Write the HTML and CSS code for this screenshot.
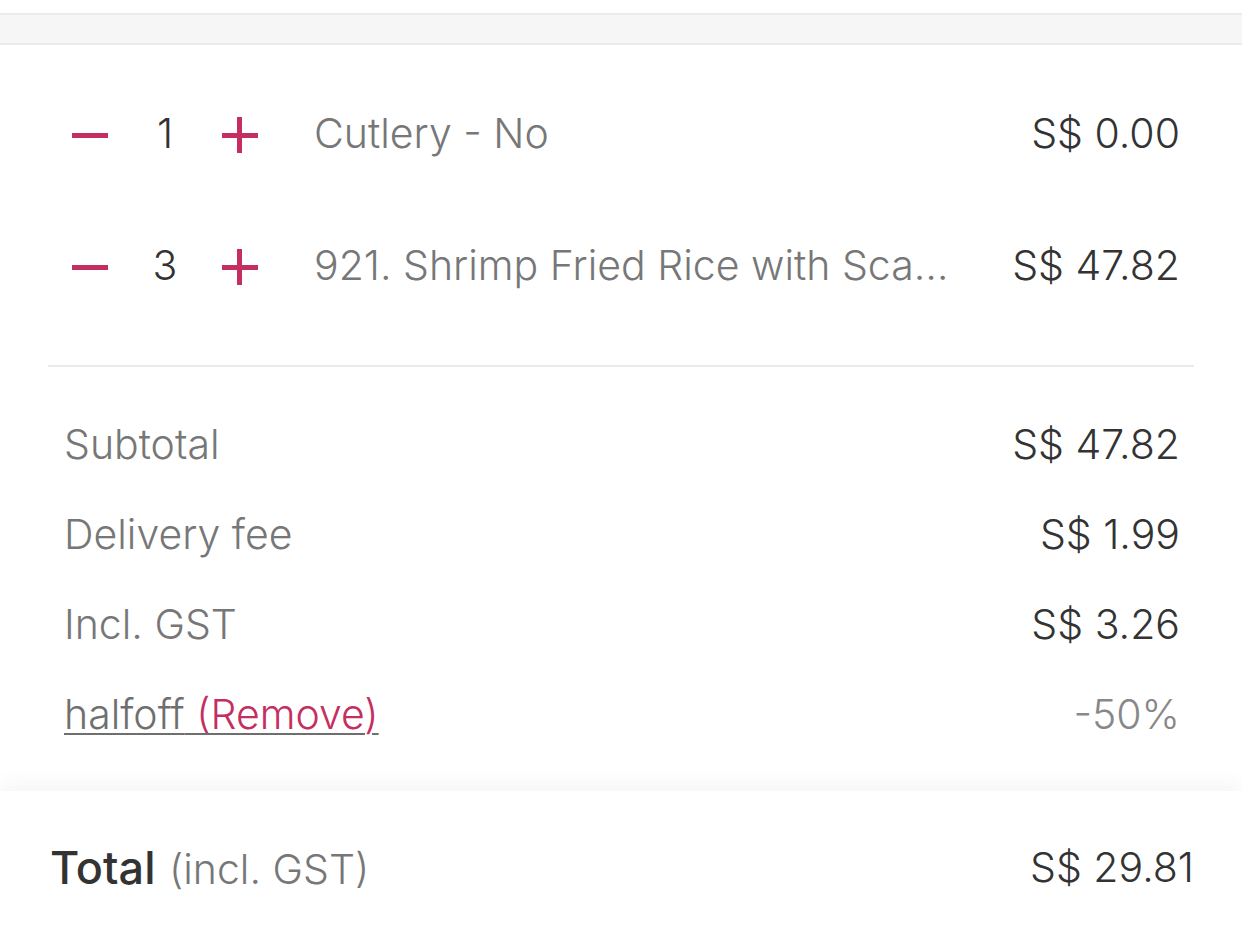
FILE: index.html
```html
<!DOCTYPE html>
<html lang="en">
<head>
    <meta charset="UTF-8">
    <meta name="viewport" content="width=device-width, initial-scale=1.0">
    <title>Cart Summary</title>
    <link rel="stylesheet" href="styles.css">
</head>
<body>

<div class="top-band"></div>

<div class="cart">
    <!-- Items -->
    <div class="items">
        <div class="item">
            <div class="stepper">
                <button class="step minus" aria-label="Decrease"></button>
                <span class="qty">1</span>
                <button class="step plus" aria-label="Increase"></button>
            </div>
            <span class="item-name">Cutlery - No</span>
            <span class="item-price">S$ 0.00</span>
        </div>

        <div class="item">
            <div class="stepper">
                <button class="step minus" aria-label="Decrease"></button>
                <span class="qty">3</span>
                <button class="step plus" aria-label="Increase"></button>
            </div>
            <span class="item-name">921. Shrimp Fried Rice with Scallops and Egg</span>
            <span class="item-price">S$ 47.82</span>
        </div>
    </div>

    <!-- Summary -->
    <div class="summary">
        <div class="summary-row">
            <span class="label">Subtotal</span>
            <span class="value">S$ 47.82</span>
        </div>
        <div class="summary-row">
            <span class="label">Delivery fee</span>
            <span class="value">S$ 1.99</span>
        </div>
        <div class="summary-row">
            <span class="label">Incl. GST</span>
            <span class="value">S$ 3.26</span>
        </div>
        <div class="summary-row">
            <a href="#" class="promo">halfoff<span class="remove"> (Remove)</span></a>
            <span class="value muted">-50%</span>
        </div>
    </div>
</div>

<div class="total-bar">
    <div class="total-label">
        <strong>Total</strong>
        <span class="total-note">(incl. GST)</span>
    </div>
    <span class="total-value">S$ 29.81</span>
</div>

</body>
</html>
```

FILE: styles.css
```css
body {
    font-family: 'Inter', 'Roboto', sans-serif;
    background-color: #fff;
    color: #333;
    margin: 0;
    padding: 0;
    width: 1242px;
    height: 937px;
    overflow: hidden;
}

.top-band {
    margin-top: 13px;
    height: 28px;
    background-color: #f6f6f6;
    border-top: 2px solid #ebebeb;
    border-bottom: 2px solid #ebebeb;
}

.cart {
    padding: 0 48px;
}

.items {
    padding-top: 22px;
    padding-bottom: 34px;
    border-bottom: 2px solid #ebebeb;
}

.item {
    display: flex;
    align-items: center;
    height: 132px;
    padding: 0 14px 0 16px;
}

.stepper {
    display: flex;
    align-items: center;
    flex-shrink: 0;
}

.step {
    position: relative;
    width: 52px;
    height: 52px;
    padding: 0;
    border: none;
    background: none;
    cursor: pointer;
}

.step::before,
.step::after {
    content: "";
    position: absolute;
    background-color: #c52e61;
}

.step::before {
    left: 8px;
    top: 26px;
    width: 36px;
    height: 5px;
}

.plus::after {
    left: 23px;
    top: 10px;
    width: 5px;
    height: 36px;
}

.qty {
    width: 98px;
    text-align: center;
    font-size: 41px;
    font-weight: 300;
    color: #333;
}

.item-name {
    flex: 1;
    min-width: 0;
    margin-left: 48px;
    margin-right: 60px;
    white-space: nowrap;
    overflow: hidden;
    text-overflow: ellipsis;
    font-size: 41px;
    font-weight: 300;
    color: #777;
}

.item-price {
    flex-shrink: 0;
    font-size: 41px;
    font-weight: 300;
    color: #333;
}

.summary {
    padding: 32px 14px 0 16px;
}

.summary-row {
    display: flex;
    justify-content: space-between;
    align-items: center;
    height: 90px;
    font-size: 41px;
    font-weight: 300;
}

.label {
    color: #777;
}

.value {
    color: #333;
}

.value.muted {
    color: #888;
}

.promo {
    color: #6f6f6f;
    text-decoration: underline;
    text-decoration-thickness: 2px;
    text-underline-offset: 4px;
}

.remove {
    color: #c52e61;
}

.total-bar {
    display: flex;
    justify-content: space-between;
    align-items: center;
    margin-top: 32px;
    padding: 0 48px 4px 50px;
    height: 152px;
    background: #fff;
    box-shadow: 0 -8px 18px rgba(0, 0, 0, 0.04);
}

.total-label strong {
    font-size: 45px;
    font-weight: 500;
    color: #333;
}

.total-note {
    margin-left: 9px;
    font-size: 41px;
    font-weight: 300;
    color: #777;
}

.total-value {
    font-size: 41px;
    font-weight: 300;
    color: #333;
}
```
